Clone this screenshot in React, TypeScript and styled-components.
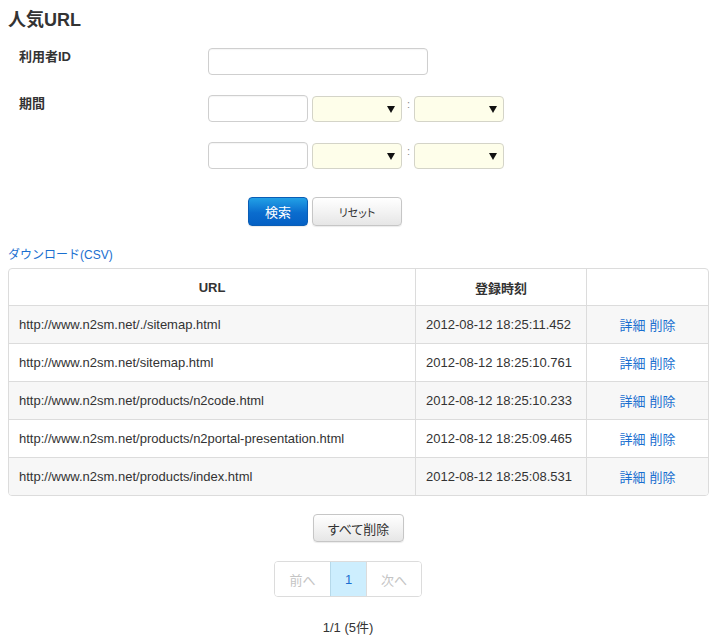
import React from "react";
import styled, { createGlobalStyle } from "styled-components";

const Global = createGlobalStyle`
  body {
    margin: 8px;
    font-family: "Liberation Sans", Arial, "Noto Sans CJK JP", sans-serif;
    font-size: 13px;
    color: #333;
    background: #fff;
  }
`;

const Page = styled.div`
  display: flex;
  flex-direction: column;
`;

const Title = styled.h1`
  margin: 0;
  font-size: 18px;
  line-height: 24px;
  font-weight: bold;
  color: #333;
`;

const Form = styled.div`
  display: grid;
  grid-template-columns: 189px 1fr;
  row-gap: 20px;
  padding-left: 11px;
  margin-top: 16px;
`;

const Label = styled.div`
  font-weight: bold;
  line-height: 18px;
`;

const Field = styled.div`
  display: flex;
  align-items: flex-end;
`;

const TextInput = styled.input<{ $w: number }>`
  box-sizing: border-box;
  width: ${(p) => p.$w}px;
  height: 27px;
  margin: 0;
  border: 1px solid #cfcfcf;
  border-radius: 4px;
  background: #fff;
  box-shadow: inset 0 1px 1px rgba(0, 0, 0, 0.04);
`;

const SelectBox = styled.div<{ $ml: number }>`
  box-sizing: border-box;
  width: 90px;
  height: 26px;
  margin-left: ${(p) => p.$ml}px;
  border: 1px solid #d4d4c8;
  border-radius: 4px;
  background: #fefeea;
  display: flex;
  align-items: center;
  justify-content: flex-end;
  padding-right: 6px;
`;

const Arrow = styled.span`
  width: 0;
  height: 0;
  border-left: 4px solid transparent;
  border-right: 4px solid transparent;
  border-top: 7px solid #111;
`;

const Colon = styled.span`
  align-self: flex-start;
  font-size: 11px;
  line-height: 14px;
  color: #888;
  margin: 2px 4px 0 5px;
`;

const ButtonRow = styled.div`
  display: flex;
  gap: 4px;
  padding-left: 240px;
  margin-top: 28px;
`;

const Button = styled.button<{ $primary?: boolean; $w: number; $h: number; $fs?: number }>`
  box-sizing: border-box;
  width: ${(p) => p.$w}px;
  height: ${(p) => p.$h}px;
  margin: 0;
  padding: 0;
  border-radius: 4px;
  font-family: "Liberation Sans", Arial, "Noto Sans CJK JP", sans-serif;
  font-size: ${(p) => p.$fs ?? 13}px;
  font-feature-settings: "palt";
  cursor: pointer;
  border: 1px solid ${(p) => (p.$primary ? "#0a5db5" : "#c6c6c6")};
  color: ${(p) => (p.$primary ? "#fff" : "#333")};
  background: ${(p) =>
    p.$primary
      ? "linear-gradient(#22a0e6, #0a6cce 55%, #0460c4)"
      : "linear-gradient(#ffffff, #f3f3f3 50%, #e6e6e6)"};
  box-shadow: 0 1px 1px rgba(0, 0, 0, 0.08);
`;

const CsvLink = styled.a`
  margin-top: 20px;
  font-size: 12px;
  line-height: 18px;
  color: #1a6fd0;
  text-decoration: none;
  align-self: flex-start;
`;

const TableWrap = styled.div`
  margin-top: 4px;
  border: 1px solid #dcdcdc;
  border-radius: 4px;
  overflow: hidden;
`;

const Table = styled.table`
  width: 100%;
  border-collapse: separate;
  border-spacing: 0;
  table-layout: fixed;
`;

const Th = styled.th`
  height: 36px;
  padding: 0 10px;
  font-weight: bold;
  text-align: center;
  border-left: 1px solid #dcdcdc;
  &:first-child {
    border-left: none;
  }
`;

const Tr = styled.tr<{ $alt: boolean }>`
  background: ${(p) => (p.$alt ? "#f7f7f7" : "#fff")};
`;

const Td = styled.td<{ $center?: boolean }>`
  height: 37px;
  padding: 0 10px;
  border-top: 1px solid #dcdcdc;
  border-left: 1px solid #dcdcdc;
  text-align: ${(p) => (p.$center ? "center" : "left")};
  white-space: nowrap;
  &:first-child {
    border-left: none;
  }
`;

const ActionLink = styled.a`
  color: #1a6fd0;
  text-decoration: none;
  margin: 0 2px;
`;

const Center = styled.div<{ $mt: number; $shift?: number }>`
  display: flex;
  justify-content: center;
  margin-top: ${(p) => p.$mt}px;
  padding-right: ${(p) => p.$shift ?? 0}px;
`;

const Pager = styled.ul`
  display: flex;
  margin: 0;
  padding: 0;
  list-style: none;
  border: 1px solid #dcdcdc;
  border-radius: 4px;
  overflow: hidden;
`;

const PageItem = styled.li<{ $w: number; $active?: boolean; $disabled?: boolean }>`
  box-sizing: border-box;
  width: ${(p) => p.$w}px;
  height: 34px;
  display: flex;
  align-items: center;
  justify-content: center;
  border-left: 1px solid ${(p) => (p.$active ? "#b6d9ea" : "#dcdcdc")};
  background: ${(p) => (p.$active ? "#cdeefe" : "#fff")};
  color: ${(p) => (p.$disabled ? "#c4c4c4" : "#1a6fd0")};
  &:first-child {
    border-left: none;
  }
`;

const Count = styled.div`
  margin-top: 22px;
  line-height: 18px;
  text-align: center;
  padding-right: 21px;
`;

const rows = [
  ["http://www.n2sm.net/./sitemap.html", "2012-08-12 18:25:11.452"],
  ["http://www.n2sm.net/sitemap.html", "2012-08-12 18:25:10.761"],
  ["http://www.n2sm.net/products/n2code.html", "2012-08-12 18:25:10.233"],
  ["http://www.n2sm.net/products/n2portal-presentation.html", "2012-08-12 18:25:09.465"],
  ["http://www.n2sm.net/products/index.html", "2012-08-12 18:25:08.531"],
];

const DateRow = () => (
  <Field>
    <TextInput $w={100} />
    <SelectBox $ml={4}>
      <Arrow />
    </SelectBox>
    <Colon>:</Colon>
    <SelectBox $ml={0}>
      <Arrow />
    </SelectBox>
  </Field>
);

export default function App() {
  return (
    <Page>
      <Global />
      <Title>人気URL</Title>
      <Form>
        <Label>利用者ID</Label>
        <Field>
          <TextInput $w={220} />
        </Field>
        <Label>期間</Label>
        <DateRow />
        <Label />
        <DateRow />
      </Form>
      <ButtonRow>
        <Button $primary $w={60} $h={29}>検索</Button>
        <Button $w={90} $h={29} $fs={11}>リセット</Button>
      </ButtonRow>
      <CsvLink href="#">ダウンロード(CSV)</CsvLink>
      <TableWrap>
        <Table>
          <colgroup>
            <col style={{ width: 406 }} />
            <col style={{ width: 171 }} />
            <col />
          </colgroup>
          <thead>
            <tr>
              <Th>URL</Th>
              <Th>登録時刻</Th>
              <Th></Th>
            </tr>
          </thead>
          <tbody>
            {rows.map(([url, time], i) => (
              <Tr key={url} $alt={i % 2 === 0}>
                <Td>{url}</Td>
                <Td>{time}</Td>
                <Td $center>
                  <ActionLink href="#">詳細</ActionLink>
                  <ActionLink href="#">削除</ActionLink>
                </Td>
              </Tr>
            ))}
          </tbody>
        </Table>
      </TableWrap>
      <Center $mt={18}>
        <Button $w={91} $h={28}>すべて削除</Button>
      </Center>
      <Center $mt={19} $shift={21}>
        <Pager>
          <PageItem $w={55} $disabled>前へ</PageItem>
          <PageItem $w={36} $active>1</PageItem>
          <PageItem $w={55} $disabled>次へ</PageItem>
        </Pager>
      </Center>
      <Count>1/1 (5件)</Count>
    </Page>
  );
}
